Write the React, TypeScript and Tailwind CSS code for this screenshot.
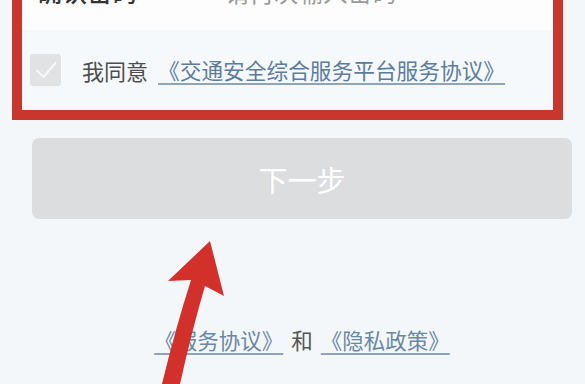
import React from "react";

export default function App() {
  return (
    <div className="relative w-[585px] h-[384px] overflow-hidden bg-[#f4f7f9] font-['Noto_Sans_CJK_SC','Noto_Sans',sans-serif]">
      <div className="-mt-[40px] ml-[12px] w-[551px] border-[10px] border-[#c9362d] bg-[#f6f9fb]">
        <div className="h-[60px] bg-[#fdfdfd] flex items-start pt-[9px] pl-[15px]">
          <span className="w-[188px] text-[25px] leading-[25px] font-medium text-[#333]">确认密码</span>
          <span className="text-[24.5px] leading-[25px] text-[#9a9a9a]">请再次输入密码</span>
        </div>
        <div className="h-[80px] flex items-center pl-[8px]">
          <div className="w-[31px] h-[32px] rounded-[3px] bg-[#e1e2e3] flex items-center justify-center">
            <svg width="24" height="24" viewBox="0 0 24 24" fill="none">
              <path d="M3 12.5 L9.5 19 L21.5 5" stroke="#f7f7f7" strokeWidth="2" strokeLinecap="round" strokeLinejoin="round" />
            </svg>
          </div>
          <span className="ml-[21px] text-[22px] leading-[28px] text-[#4d4d4d]">我同意</span>
          <span className="ml-[10px] text-[21.7px] leading-[28px] text-[#5d7c9b] underline decoration-[#8ea4b8] underline-offset-[4px] decoration-[1.5px]">
            《交通安全综合服务平台服务协议》
          </span>
        </div>
      </div>
      <div className="mt-[18px] ml-[32px] w-[540px] h-[81px] rounded-[7px] bg-[#dcdddf] flex items-center justify-center">
        <span className="text-[29px] leading-[32px] text-white">下一步</span>
      </div>
      <div className="mt-[107px] ml-[32px] w-[540px] flex justify-center items-center text-[21.5px] leading-[28px]">
        <span className="text-[#6a87a3] underline decoration-[#8ea4b8] underline-offset-[4px] decoration-[1.5px]">《服务协议》</span>
        <span className="mx-[8px] text-[#555]">和</span>
        <span className="text-[#6a87a3] underline decoration-[#8ea4b8] underline-offset-[4px] decoration-[1.5px]">《隐私政策》</span>
      </div>
      <svg className="absolute left-0 top-0" width="585" height="384" viewBox="0 0 585 384">
        <path
          d="M210 241 L224 296 L205 286 Q192 330 180 384 L162 384 Q175 330 191 280 L168 281 Z"
          fill="#d2302b"
        />
      </svg>
    </div>
  );
}
